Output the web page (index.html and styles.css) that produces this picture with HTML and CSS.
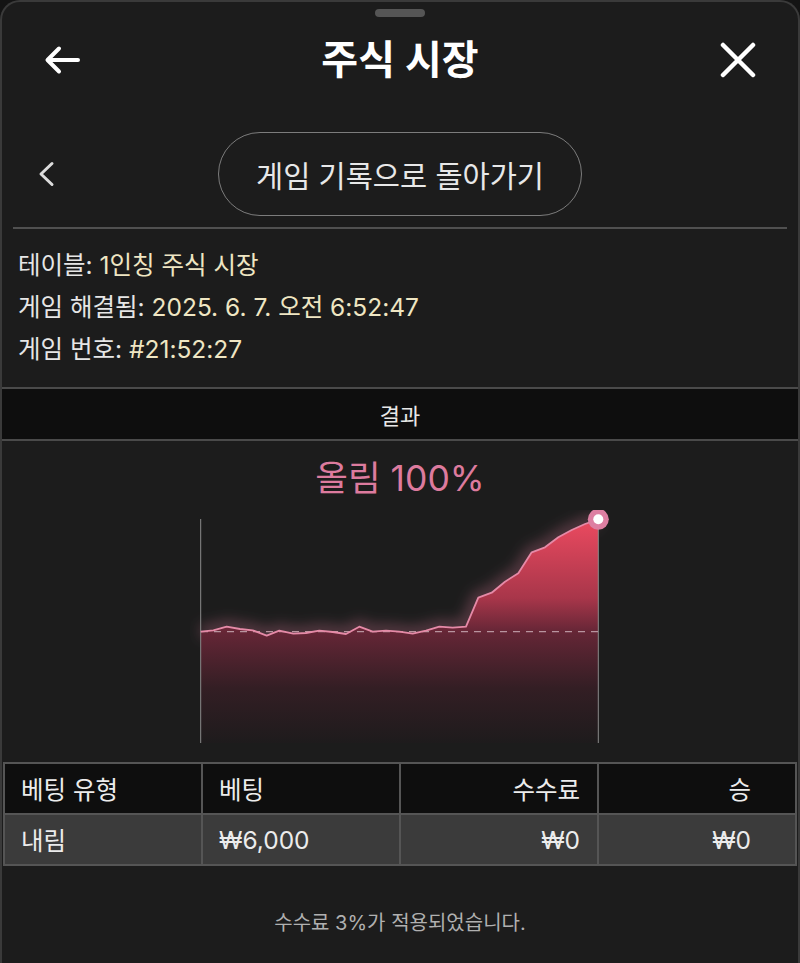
FILE: index.html
```html
<!DOCTYPE html>
<html lang="ko">
<head>
<meta charset="utf-8">
<title>주식 시장</title>
<link rel="stylesheet" href="styles.css">
</head>
<body>
<div class="sheet">
  <div class="handle"></div>
  <header class="topbar">
    <svg class="icon-back" width="36" height="30" viewBox="0 0 36 30">
      <path d="M34 15 H4 M15 3.5 L3.5 15 L15 26.5" fill="none" stroke="#fff" stroke-width="4" stroke-linecap="round" stroke-linejoin="round"/>
    </svg>
    <h1 class="title">주식 시장</h1>
    <svg class="icon-close" width="36" height="36" viewBox="0 0 36 36">
      <path d="M3 3 L33 33 M33 3 L3 33" fill="none" stroke="#fff" stroke-width="4.5" stroke-linecap="round"/>
    </svg>
  </header>
  <div class="navrow">
    <div class="nav-left">
      <svg width="18" height="26" viewBox="0 0 18 26">
        <path d="M15 2.5 L4 13 L15 23.5" fill="none" stroke="#dcdcdc" stroke-width="3" stroke-linecap="round" stroke-linejoin="round"/>
      </svg>
    </div>
    <button class="pill">게임 기록으로 돌아가기</button>
    <div></div>
  </div>
  <div class="divider"></div>
  <div class="info">
    <p><span class="lbl">테이블:</span> <span class="val">1인칭 주식 시장</span></p>
    <p><span class="lbl">게임 해결됨:</span> <span class="val">2025. 6. 7. 오전 6:52:47</span></p>
    <p><span class="lbl">게임 번호:</span> <span class="val">#21:52:27</span></p>
  </div>
  <div class="results-bar">결과</div>
  <section class="chart">
    <div class="chart-title">올림 100%</div>
    <svg class="chart-svg" width="420" height="240" viewBox="190 510 420 240">
      <defs>
        <linearGradient id="fillg" x1="0" y1="519" x2="0" y2="745" gradientUnits="userSpaceOnUse">
          <stop offset="0" stop-color="#ec4a60"/>
          <stop offset="0.35" stop-color="#a8364a"/>
          <stop offset="0.5" stop-color="#652636"/>
          <stop offset="0.75" stop-color="#331e24"/>
          <stop offset="1" stop-color="#1d1b1c"/>
        </linearGradient>
        <filter id="glow" x="-20%" y="-40%" width="140%" height="180%">
          <feGaussianBlur stdDeviation="7"/>
        </filter>
      </defs>
      <path d="M200.7 631.7 L213.3 630.3 L226.7 626.7 L240 629 L252.7 630.3 L266.7 635.7 L279.3 630.7 L293.3 633.7 L306 633 L319.3 630.7 L332.7 632 L346 634 L359.3 626.7 L372.7 631.7 L386 630.7 L399.3 631.7 L412.7 633.7 L426 630.7 L439.3 626.7 L452.7 627.7 L466 626.7 L478.3 597.7 L491.7 592.7 L505 581.7 L518.3 573.3 L531.7 552.3 L545 547.3 L558.3 537.3 L571.7 530 L585 524 L598.3 519.3" fill="none" stroke="#e07a9c" stroke-opacity="0.35" stroke-width="12" filter="url(#glow)"/>
      <path d="M200.7 631.7 L213.3 630.3 L226.7 626.7 L240 629 L252.7 630.3 L266.7 635.7 L279.3 630.7 L293.3 633.7 L306 633 L319.3 630.7 L332.7 632 L346 634 L359.3 626.7 L372.7 631.7 L386 630.7 L399.3 631.7 L412.7 633.7 L426 630.7 L439.3 626.7 L452.7 627.7 L466 626.7 L478.3 597.7 L491.7 592.7 L505 581.7 L518.3 573.3 L531.7 552.3 L545 547.3 L558.3 537.3 L571.7 530 L585 524 L598.3 519.3 L598.3 743 L200.7 743 Z" fill="url(#fillg)"/>
      <line x1="200.7" y1="519" x2="200.7" y2="743" stroke="#8a8a8a" stroke-width="1"/>
      <line x1="598.3" y1="519" x2="598.3" y2="743" stroke="#8a8a8a" stroke-width="1"/>
      <line x1="201" y1="631.7" x2="598" y2="631.7" stroke="#b8949f" stroke-width="1.2" stroke-dasharray="7 6"/>
      <path d="M200.7 631.7 L213.3 630.3 L226.7 626.7 L240 629 L252.7 630.3 L266.7 635.7 L279.3 630.7 L293.3 633.7 L306 633 L319.3 630.7 L332.7 632 L346 634 L359.3 626.7 L372.7 631.7 L386 630.7 L399.3 631.7 L412.7 633.7 L426 630.7 L439.3 626.7 L452.7 627.7 L466 626.7 L478.3 597.7 L491.7 592.7 L505 581.7 L518.3 573.3 L531.7 552.3 L545 547.3 L558.3 537.3 L571.7 530 L585 524 L598.3 519.3" fill="none" stroke="#e58aa7" stroke-width="1.8" stroke-linejoin="round"/>
      <circle cx="598.3" cy="519.3" r="10.5" fill="#dd7fa2"/>
      <circle cx="598.3" cy="519.3" r="5" fill="#ffffff"/>
    </svg>
  </section>
  <div class="bets">
    <div class="cell head">베팅 유형</div>
    <div class="cell head">베팅</div>
    <div class="cell head right">수수료</div>
    <div class="cell head right last">승</div>
    <div class="cell data">내림</div>
    <div class="cell data">₩6,000</div>
    <div class="cell data right">₩0</div>
    <div class="cell data right last">₩0</div>
  </div>
  <p class="note">수수료 3%가 적용되었습니다.</p>
</div>
</body>
</html>
```

FILE: styles.css
```css
html, body {
  margin: 0;
  padding: 0;
  background: #141414;
}
body {
  font-family: "Inter", "Noto Sans CJK KR", "Noto Sans", sans-serif;
  color: #e8e8e8;
}
.sheet {
  box-sizing: border-box;
  width: 800px;
  height: 963px;
  background: #1c1c1c;
  border: 2px solid #3a3a3a;
  border-bottom: none;
  border-radius: 20px 20px 0 0;
  display: flex;
  flex-direction: column;
  overflow: hidden;
}
.handle {
  align-self: center;
  width: 50px;
  height: 8px;
  margin-top: 7px;
  border-radius: 4px;
  background: #555;
}
.topbar {
  height: 86px;
  display: flex;
  align-items: center;
  justify-content: space-between;
  padding: 0 42px 0 42px;
}
.title {
  margin: 0;
  font-size: 40px;
  font-weight: 600;
  color: #fff;
  line-height: 44px;
}
.navrow {
  margin-top: 29px;
  height: 84px;
  display: grid;
  grid-template-columns: 1fr auto 1fr;
  align-items: center;
}
.nav-left {
  padding-left: 35px;
  display: flex;
  align-items: center;
}
.pill {
  box-sizing: border-box;
  width: 364px;
  height: 84px;
  border: 1.5px solid #7c7c7c;
  border-radius: 42px;
  background: transparent;
  color: #e8e8e8;
  font-family: "Inter", "Noto Sans CJK KR", "Noto Sans", sans-serif;
  font-size: 29.5px;
  padding: 0;
}
.divider {
  margin: 11px 11px 0 11px;
  height: 2px;
  background: #505050;
}
.info {
  padding: 15px 16px 17px 16px;
}
.info p {
  margin: 0;
  font-size: 24.5px;
  line-height: 42px;
  height: 42px;
}
.lbl { color: #e6e6e6; }
.val { color: #efe6c3; }
.results-bar {
  height: 50px;
  border-top: 2px solid #4a4a4a;
  border-bottom: 2px solid #4a4a4a;
  background: #0e0e0e;
  display: flex;
  align-items: center;
  justify-content: center;
  font-size: 22px;
  color: #e8e8e8;
}
.chart {
  height: 321px;
  box-sizing: border-box;
  padding-top: 18px;
  display: flex;
  flex-direction: column;
  align-items: center;
}
.chart-title {
  font-size: 35.5px;
  line-height: 40px;
  color: #dd7b9e;
}
.chart-svg {
  display: block;
  margin-top: 11px;
}
.bets {
  margin: 0 1px;
  padding: 2px;
  background: #555;
  display: grid;
  grid-template-columns: repeat(4, 1fr);
  grid-auto-rows: 49px;
  gap: 2px;
}
.cell {
  display: flex;
  align-items: center;
  padding: 0 16px;
  font-size: 24.5px;
  color: #ececec;
}
.cell.head { background: #0e0e0e; }
.cell.data { background: #3b3b3b; }
.cell.right { justify-content: flex-end; padding-right: 17px; }
.cell.last { padding-right: 44px; }
.note {
  margin: 45px 0 0 0;
  text-align: center;
  font-size: 20px;
  line-height: 24px;
  color: #b0b0b0;
}
```
